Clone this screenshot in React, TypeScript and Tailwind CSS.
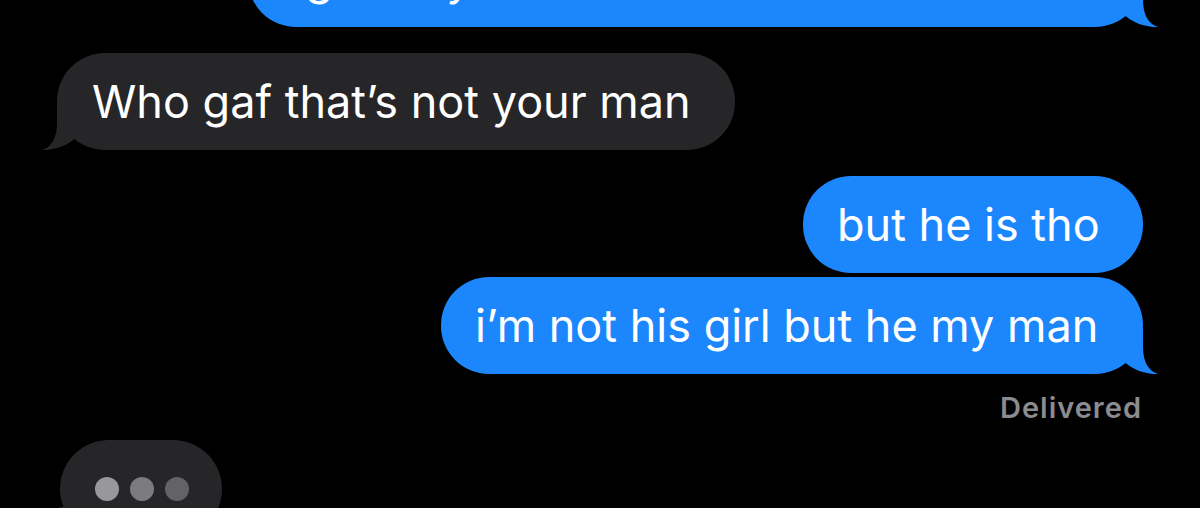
import clsx from 'clsx'

type Side = 'left' | 'right'

function Tail({ side, color }: { side: Side; color: string }) {
  return (
    <svg
      width="40"
      height="45"
      viewBox="0 0 40 45"
      className={clsx(
        'absolute bottom-0',
        side === 'right' ? 'right-[-15px]' : 'left-[-15px] -scale-x-100'
      )}
    >
      <path
        d="M25 0 L25 18 C25 32 30 42 40 45 C31 45.5 17 42 9 35 L0 30 L0 0 Z"
        fill={color}
      />
    </svg>
  )
}

function Bubble({
  text,
  mine,
  tail,
  width,
}: {
  text: string
  mine?: boolean
  tail?: boolean
  width: string
}) {
  const color = mine ? '#1c87fd' : '#262629'
  return (
    <div
      className={clsx(
        'relative flex h-[97px] items-center rounded-[48px] text-[45px] leading-none whitespace-nowrap text-white',
        mine ? 'bg-[#1c87fd] pl-[34px] pr-[46px]' : 'bg-[#262629] pl-[35px] pr-[46px]',
        width
      )}
    >
      {tail && <Tail side={mine ? 'right' : 'left'} color={color} />}
      <span className="relative">{text}</span>
    </div>
  )
}

export default function App() {
  return (
    <div className="h-[508px] w-[1200px] overflow-hidden bg-black font-['Inter',sans-serif]">
      <div className="flex flex-col px-[57px]">
        <div className="mt-[-70px] flex justify-end">
          <Bubble mine tail width="w-[895px]" text="i guess you could still talk to him at least" />
        </div>

        <div className="mt-[26px] flex justify-start">
          <Bubble tail width="w-[678px]" text="Who gaf that’s not your man" />
        </div>

        <div className="mt-[26px] flex justify-end">
          <Bubble mine width="w-[340px]" text="but he is tho" />
        </div>

        <div className="mt-[4px] flex justify-end">
          <Bubble mine tail width="w-[702px]" text="i’m not his girl but he my man" />
        </div>

        <div className="mt-[19px] flex justify-end pr-[1px]">
          <span className="text-[29px] leading-none font-semibold tracking-[1px] text-[#8b8b90]">
            Delivered
          </span>
        </div>

        <div className="mt-[18px] ml-[3px] flex">
          <div className="relative flex h-[98px] w-[162px] items-center gap-[11px] rounded-full bg-[#262629] pl-[35px]">
            <span className="absolute top-[67px] left-[-12px] h-[30px] w-[30px] rounded-full bg-[#262629]" />
            <span className="h-[24px] w-[24px] rounded-full bg-[#98989c]" />
            <span className="h-[24px] w-[24px] rounded-full bg-[#7b7b7f]" />
            <span className="h-[24px] w-[24px] rounded-full bg-[#636366]" />
          </div>
        </div>
      </div>
    </div>
  )
}
